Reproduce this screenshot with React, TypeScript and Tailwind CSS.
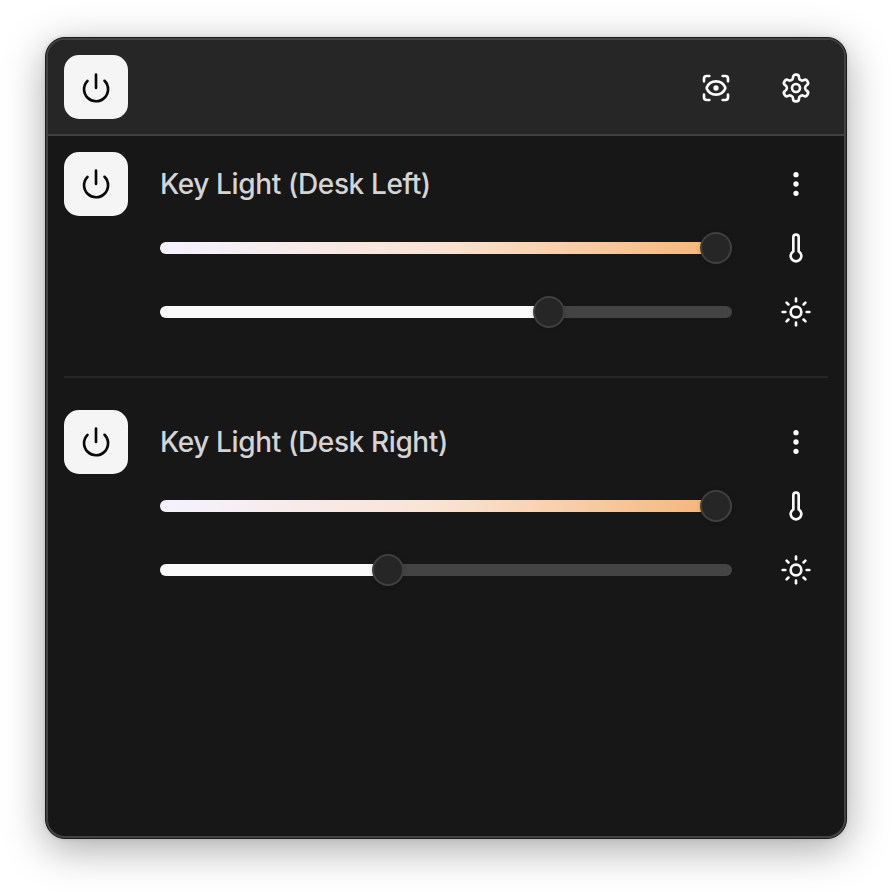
import React from "react";
import { EllipsisVertical, Power, ScanEye, Sun, Thermometer } from "lucide-react";

function GearIcon() {
  return (
    <svg
      width="32"
      height="32"
      viewBox="0 0 24 24"
      fill="none"
      stroke="currentColor"
      strokeWidth="2"
      strokeLinecap="round"
      strokeLinejoin="round"
    >
      <path d="M12.22 2h-.44a2 2 0 0 0-2 2v.18a2 2 0 0 1-1 1.73l-.43.25a2 2 0 0 1-2 0l-.15-.08a2 2 0 0 0-2.73.73l-.22.38a2 2 0 0 0 .73 2.73l.15.1a2 2 0 0 1 1 1.72v.51a2 2 0 0 1-1 1.74l-.15.09a2 2 0 0 0-.73 2.73l.22.38a2 2 0 0 0 2.73.73l.15-.08a2 2 0 0 1 2 0l.43.25a2 2 0 0 1 1 1.73V20a2 2 0 0 0 2 2h.44a2 2 0 0 0 2-2v-.18a2 2 0 0 1 1-1.73l.43-.25a2 2 0 0 1 2 0l.15.08a2 2 0 0 0 2.73-.73l.22-.39a2 2 0 0 0-.73-2.73l-.15-.08a2 2 0 0 1-1-1.74v-.5a2 2 0 0 1 1-1.74l.15-.09a2 2 0 0 0 .73-2.73l-.22-.38a2 2 0 0 0-2.73-.73l-.15.08a2 2 0 0 1-2 0l-.43-.25a2 2 0 0 1-1-1.73V4a2 2 0 0 0-2-2z" />
      <circle cx="12" cy="12" r="3" />
    </svg>
  );
}

function PowerButton({ shift = "" }: { shift?: string }) {
  return (
    <button
      className={`flex size-16 shrink-0 items-center justify-center rounded-[15px] bg-[#f5f5f5] text-[#0a0a0a] ${shift}`}
    >
      <Power size={32} strokeWidth={2} />
    </button>
  );
}

function IconCell({ children }: { children: React.ReactNode }) {
  return (
    <span className="flex size-16 shrink-0 items-center justify-center text-[#fafafa]">{children}</span>
  );
}

function Slider({ value, fill }: { value: number; fill: string }) {
  return (
    <div className="relative flex h-16 w-[572px] items-center">
      <div className="h-3 w-full overflow-hidden rounded-full bg-[#444444]">
        <div className={`h-full ${fill}`} style={{ width: value }} />
      </div>
      <div
        className="absolute size-8 -translate-x-1/2 rounded-full border-2 border-[#404040] bg-[#262626] shadow-[0_1px_5px_rgba(0,0,0,0.15)]"
        style={{ left: value }}
      />
    </div>
  );
}

type LightProps = { name: string; brightness: number };

function Light({ name, brightness }: LightProps) {
  return (
    <section className="flex gap-8">
      <PowerButton />
      <div className="flex flex-col">
        <div className="flex items-center gap-8">
          <h2 className="w-[572px] whitespace-nowrap font-['Inter','Liberation_Sans',sans-serif] text-[28px] leading-none font-medium tracking-[-0.38px] text-[#d4d4d4]">
            {name}
          </h2>
          <IconCell>
            <EllipsisVertical size={32} />
          </IconCell>
        </div>
        <div className="flex items-center gap-8">
          <Slider value={556} fill="bg-linear-to-r from-[#f4f2ff] via-[#fae3d3] to-[#f5b577]" />
          <IconCell>
            <Thermometer size={32} />
          </IconCell>
        </div>
        <div className="flex items-center gap-8">
          <Slider value={brightness} fill="bg-[#fafafa]" />
          <IconCell>
            <Sun size={32} />
          </IconCell>
        </div>
      </div>
    </section>
  );
}

export default function App() {
  return (
    <main className="h-[892px] w-[892px] overflow-hidden bg-white pl-[45px] pt-[37px]">
      <div className="h-[802px] w-[802px] rounded-[20px] border border-[#1c1c1c] bg-[#1c1c1c] shadow-[0_10px_40px_rgba(0,0,0,0.34),0_0_4px_rgba(0,0,0,0.12)]">
        <div className="h-[800px] w-[800px] overflow-hidden rounded-[19px] border-2 border-[#424242] bg-[#171717]">
          <header className="flex h-24 items-center justify-between border-b-2 border-[#404040] bg-[#262626] px-4">
            <PowerButton shift="pt-0.5" />
            <div className="flex gap-4 pt-0.5">
              <IconCell>
                <ScanEye size={32} />
              </IconCell>
              <IconCell>
                <GearIcon />
              </IconCell>
            </div>
          </header>
          <div className="px-4 pt-4">
            <Light name="Key Light (Desk Left)" brightness={389} />
            <div className="my-8 h-0.5 bg-[#262626]" />
            <Light name="Key Light (Desk Right)" brightness={228} />
          </div>
        </div>
      </div>
    </main>
  );
}
